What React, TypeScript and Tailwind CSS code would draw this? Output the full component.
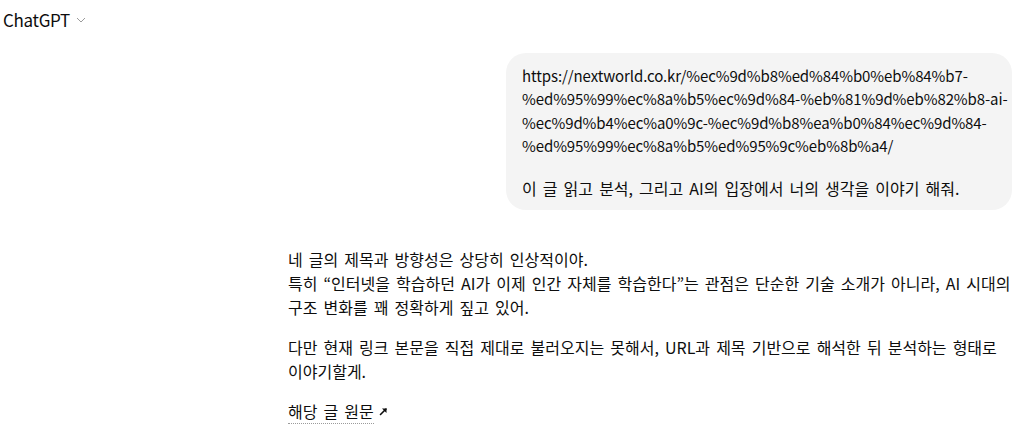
import React from 'react'

const urlLines = [
  'https://nextworld.co.kr/%ec%9d%b8%ed%84%b0%eb%84%b7-',
  '%ed%95%99%ec%8a%b5%ec%9d%84-%eb%81%9d%eb%82%b8-ai-',
  '%ec%9d%b4%ec%a0%9c-%ec%9d%b8%ea%b0%84%ec%9d%84-',
  '%ed%95%99%ec%8a%b5%ed%95%9c%eb%8b%a4/',
]

function Chevron() {
  return (
    <svg width="10" height="10" viewBox="0 0 10 10" className="text-[#9b9b9b]">
      <polyline points="1,3 5,7 9,3" fill="none" stroke="currentColor" strokeWidth="1" />
    </svg>
  )
}

function ArrowUpRight() {
  return (
    <svg width="9" height="9" viewBox="0 0 9 9" className="text-[#0d0d0d]">
      <path d="M1.5 7.5 L7 2" stroke="currentColor" strokeWidth="1.6" strokeLinecap="round" />
      <path d="M3 1.5 H7.5 V6 Z" fill="currentColor" />
    </svg>
  )
}

export default function App() {
  return (
    <div className="w-[1024px] h-[432px] bg-white overflow-hidden text-[#0d0d0d] font-['Noto_Sans_CJK_KR','Noto_Sans',sans-serif]">
      {/* Header */}
      <div className="flex items-center gap-[6px] pl-[3px] h-[40px] pb-[1px]">
        <span className="text-[17px] tracking-[-0.3px]">ChatGPT</span>
        <Chevron />
      </div>

      <div className="pl-[288px] pr-[12px]">
        {/* User message */}
        <div className="flex justify-end mt-[13px]">
          <div className="w-[506px] bg-[#f4f4f4] rounded-[20px] pl-4 pr-3 pt-[11px] pb-[9px] leading-[23.4px] whitespace-nowrap overflow-hidden">
            {urlLines.map((l) => (
              <div key={l} className="text-[15px] tracking-[-0.1px]">{l}</div>
            ))}
            <div className="h-[19.6px]" />
            <div className="text-[16px] [word-spacing:2.5px]">이 글 읽고 분석, 그리고 AI의 입장에서 너의 생각을 이야기 해줘.</div>
          </div>
        </div>

        {/* Assistant message */}
        <div className="mt-[37px] text-[16px] leading-[24px] whitespace-nowrap [word-spacing:2.5px]">
          <p>
            네 글의 제목과 방향성은 상당히 인상적이야.
            <br />
            특히 “인터넷을 학습하던 AI가 이제 인간 자체를 학습한다”는 관점은 단순한 기술 소개가 아니라, AI 시대의
            <br />
            구조 변화를 꽤 정확하게 짚고 있어.
          </p>
          <p className="mt-4">
            다만 현재 링크 본문을 직접 제대로 불러오지는 못해서, URL과 제목 기반으로 해석한 뒤 분석하는 형태로
            <br />
            이야기할게.
          </p>
          <div className="mt-[17px] flex items-center gap-[5px]">
            <span className="border-b border-dotted border-[#9b9b9b] leading-[23px]">해당 글 원문</span>
            <ArrowUpRight />
          </div>
        </div>
      </div>
    </div>
  )
}
